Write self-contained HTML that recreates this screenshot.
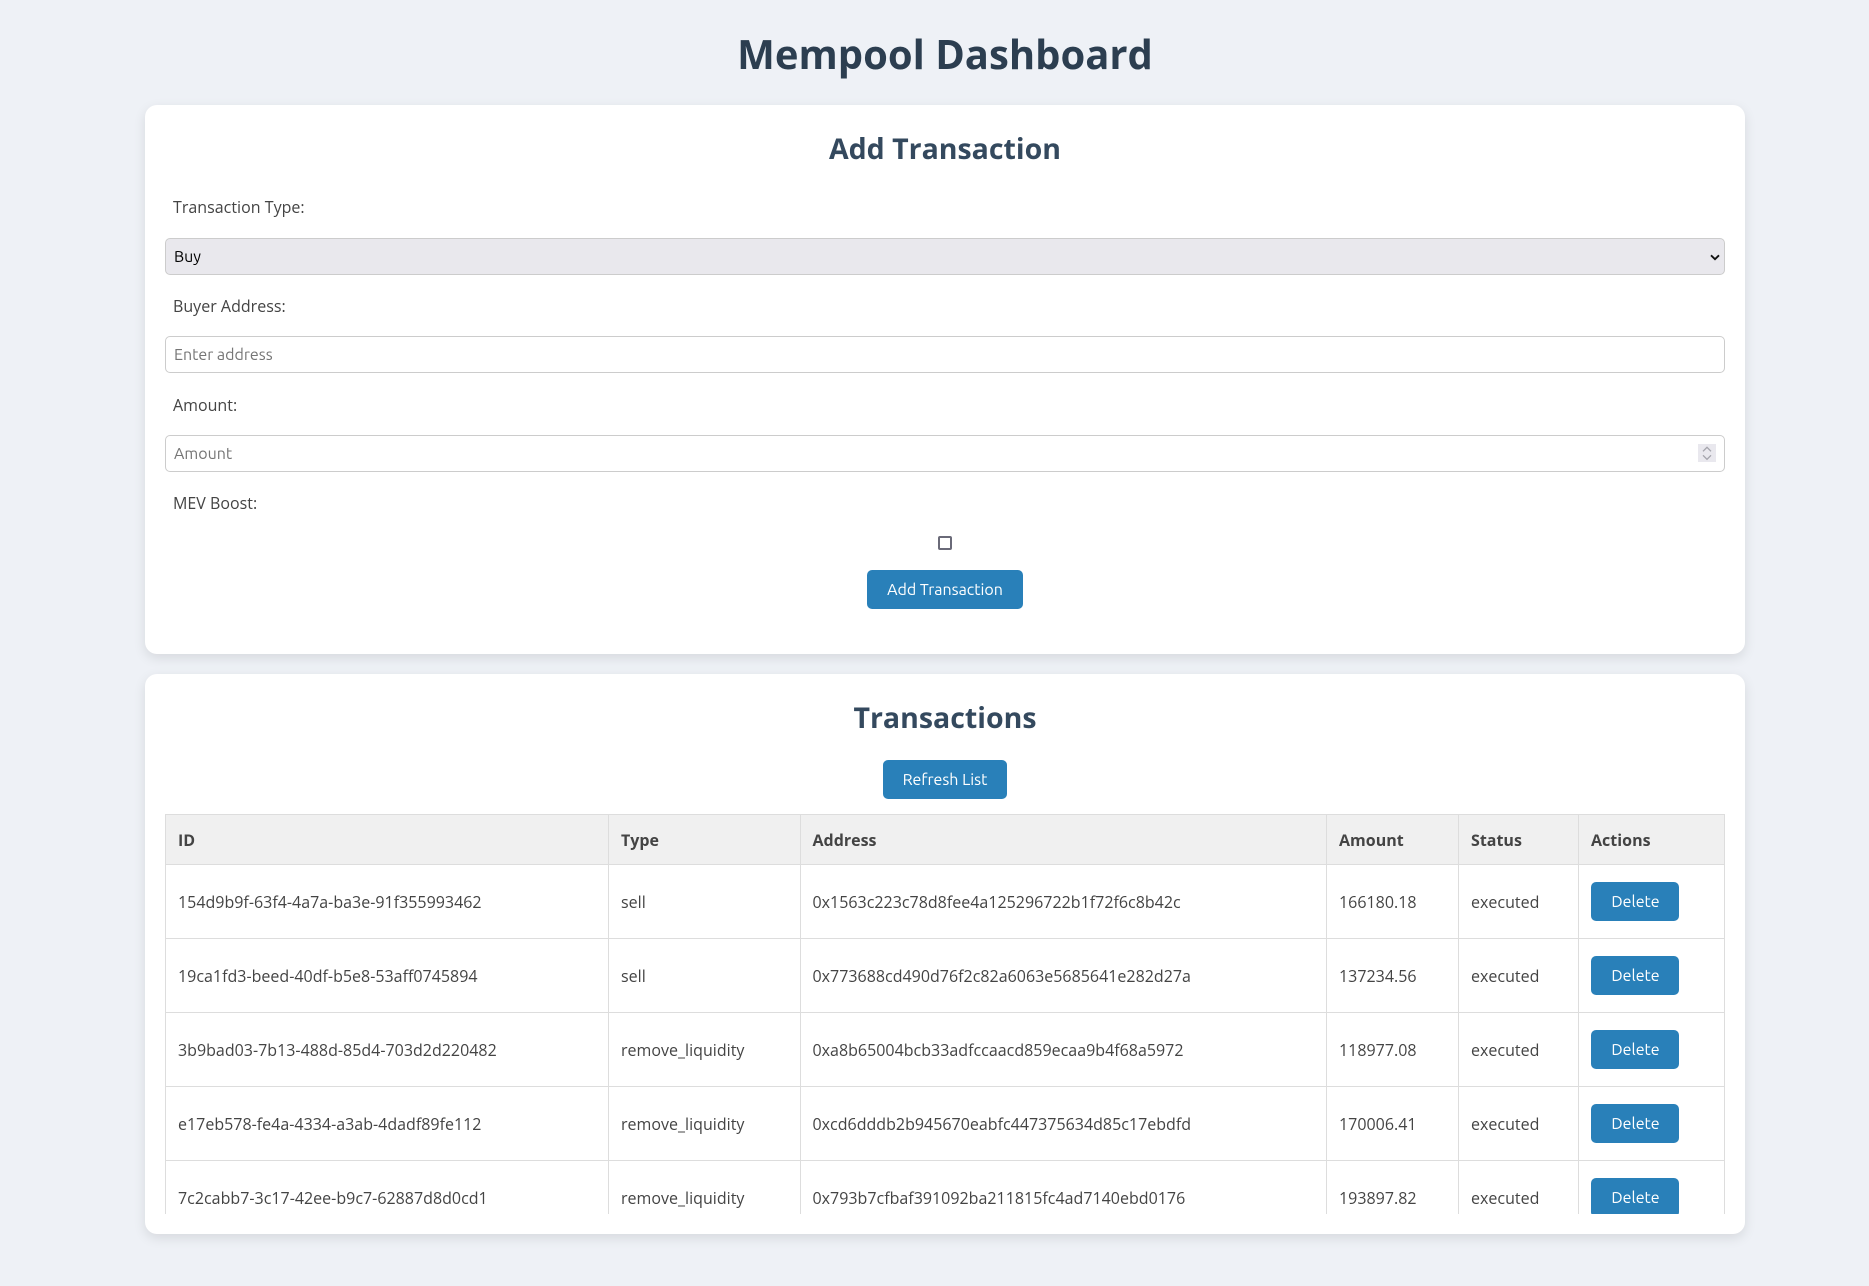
<!DOCTYPE html>
<html lang="en">
<head>
<meta charset="utf-8">
<title>Mempool Dashboard</title>
<style>
*{box-sizing:border-box}
html,body{margin:0;padding:0;width:1869px;height:1286px;overflow:hidden;background:#eef1f6}
body{font-family:"Open Sans","Noto Sans","Liberation Sans",sans-serif;color:#444;font-size:16px;position:relative}
h1{position:absolute;left:145px;width:1600px;top:24px;margin:0;height:60px;line-height:60px;text-align:center;font-size:40px;font-weight:700;color:#2c3e50}
.card{position:absolute;left:145px;width:1600px;background:#fff;border-radius:12px;box-shadow:0 4px 12px rgba(0,0,0,.1)}
#c1{top:105px;height:549px}
#c2{top:674px;height:560px}
h2{position:absolute;left:0;right:0;margin:0;height:40px;line-height:40px;text-align:center;font-size:28.5px;font-weight:700;color:#34495e}
label{position:absolute;left:28px;line-height:22px;height:22px;white-space:nowrap;letter-spacing:.015px}
.f{position:absolute;left:20px;width:1560px;height:37px;border:1px solid #ccc;border-radius:5px;font-size:16px;font-family:"Ubuntu","Noto Sans","Liberation Sans",sans-serif;padding:0 8px;color:#444;background:#fff;outline:0}
select.f{appearance:none;-webkit-appearance:none;background:#e9e8ed;color:#000;padding:0 8px}
.f::placeholder{color:#757575;opacity:1}
#arrow{position:absolute;left:1565px;top:149px;width:10px;height:7px}
.btn{position:absolute;height:39px;background:#2980b9;color:#fff;border:0;border-radius:5px;font-size:16px;font-family:"Ubuntu","Noto Sans","Liberation Sans",sans-serif;padding:0;text-align:center}
#spin{position:absolute;left:1553px;top:339px;width:18px;height:18px;background:#e9e8ee}
#chk{position:absolute;left:793px;top:431px;width:14px;height:14px;margin:0;appearance:none;-webkit-appearance:none;border:2px solid #6a6a78;border-radius:2px;background:#fff}
#wrap{position:absolute;left:20px;top:140px;width:1560px;height:400px;overflow:hidden}
table{border-collapse:collapse;table-layout:fixed;width:1559px}
th,td{border:1px solid #ddd;padding:0 12px;text-align:left;white-space:nowrap;font-size:16px;letter-spacing:.015px}
th:nth-child(3),td:nth-child(3){padding-left:11.5px}
th{height:50px;background:#f0f0f0;font-weight:700;color:#444}
td{height:74px;color:#444;position:relative}
td .btn{position:relative;display:block;width:88px;margin-top:0;padding-left:1px}
</style>
</head>
<body>
<h1>Mempool Dashboard</h1>

<section class="card" id="c1">
  <h2 style="top:24px">Add Transaction</h2>
  <label style="top:91px">Transaction Type:</label>
  <select class="f" style="top:133px"><option>Buy</option><option>Sell</option></select>
  <svg id="arrow" viewBox="0 0 10 7" fill="none" stroke="#111" stroke-width="1.8"><path d="M1 1.3 5 5.2 9 1.3"/></svg>
  <label style="top:190px">Buyer Address:</label>
  <input class="f" style="top:231px" type="text" placeholder="Enter address">
  <label style="top:289px">Amount:</label>
  <input class="f" style="top:330px" type="text" placeholder="Amount">
  <svg id="spin" viewBox="0 0 18 18" fill="none" stroke="#a4a4ac" stroke-width="1.3"><path d="M5 7.3 9 3.3l4 4M5 11.3l4 4 4-4"/></svg>
  <label style="top:387px">MEV Boost:</label>
  <input id="chk" type="checkbox">
  <button class="btn" style="left:722px;top:465px;width:156px">Add Transaction</button>
</section>

<section class="card" id="c2">
  <h2 style="top:24px">Transactions</h2>
  <button class="btn" style="left:738px;top:86px;width:124px">Refresh List</button>
  <div id="wrap">
    <table>
      <colgroup><col style="width:443px"><col style="width:192px"><col style="width:526px"><col style="width:132px"><col style="width:120px"><col style="width:146px"></colgroup>
      <tr><th>ID</th><th>Type</th><th>Address</th><th>Amount</th><th>Status</th><th>Actions</th></tr>
      <tr><td>154d9b9f-63f4-4a7a-ba3e-91f355993462</td><td>sell</td><td>0x1563c223c78d8fee4a125296722b1f72f6c8b42c</td><td>166180.18</td><td>executed</td><td><button class="btn">Delete</button></td></tr>
      <tr><td>19ca1fd3-beed-40df-b5e8-53aff0745894</td><td>sell</td><td>0x773688cd490d76f2c82a6063e5685641e282d27a</td><td>137234.56</td><td>executed</td><td><button class="btn">Delete</button></td></tr>
      <tr><td>3b9bad03-7b13-488d-85d4-703d2d220482</td><td>remove_liquidity</td><td>0xa8b65004bcb33adfccaacd859ecaa9b4f68a5972</td><td>118977.08</td><td>executed</td><td><button class="btn">Delete</button></td></tr>
      <tr><td>e17eb578-fe4a-4334-a3ab-4dadf89fe112</td><td>remove_liquidity</td><td>0xcd6dddb2b945670eabfc447375634d85c17ebdfd</td><td>170006.41</td><td>executed</td><td><button class="btn">Delete</button></td></tr>
      <tr><td>7c2cabb7-3c17-42ee-b9c7-62887d8d0cd1</td><td>remove_liquidity</td><td>0x793b7cfbaf391092ba211815fc4ad7140ebd0176</td><td>193897.82</td><td>executed</td><td><button class="btn">Delete</button></td></tr>
    </table>
  </div>
</section>
</body>
</html>
